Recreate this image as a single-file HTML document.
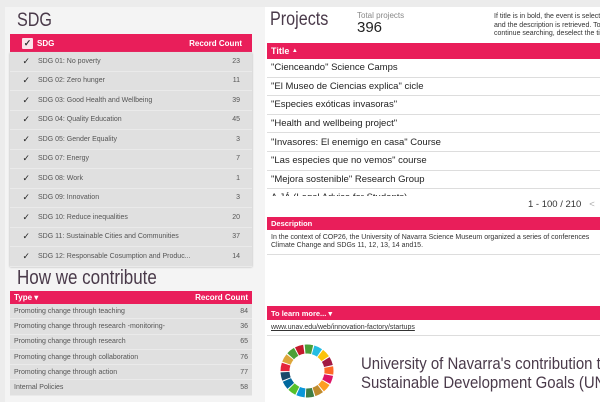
<html><head><style>
*{margin:0;padding:0;box-sizing:border-box}
body{width:600px;height:402px;overflow:hidden;background:#ececec;font-family:"Liberation Sans",sans-serif;position:relative}
.a{position:absolute}
.clip{position:absolute;left:0;top:0;width:600px;height:402px;overflow:hidden}
.hdr{background:#e91e5a;color:#fff;font-weight:bold;font-size:8px;display:flex;align-items:center;padding:0 4px}
.row{display:flex;align-items:center;font-size:7px;color:#555;border-bottom:1px solid #eaeaea}
.big{font-size:19px;color:#4a3a4a;transform:scaleX(.85);transform-origin:left}
</style></head><body><div class="clip">
<div class="a" style="left:5px;top:7px;width:260px;height:395px;background:#f4f4f4"></div>
<div class="a" style="left:265px;top:7px;width:335px;height:395px;background:#fff"></div>
<div class="a big" style="left:17px;top:10px;font-size:19px">SDG</div>
<div class="a hdr" style="left:10px;top:34px;width:242px;height:18px">
<span style="display:inline-block;width:11px;height:11px;background:#fbe3ea;border-radius:1px;color:#333;font-size:9px;line-height:11px;text-align:center;margin:0 4px 0 8px">✓</span>SDG<span style="margin-left:auto;padding-right:6px">Record Count</span></div>
<div class="a" style="left:10px;top:52px;width:242px;height:214px;background:#e0e0e0;box-shadow:0 1px 2px #aaa">
<div class="row" style="height:19.5px"><span style="width:28px;text-align:right;padding-right:8px;color:#222;font-size:9px">✓</span>SDG 01: No poverty<span style="margin-left:auto;padding-right:12px">23</span></div>
<div class="row" style="height:19.5px"><span style="width:28px;text-align:right;padding-right:8px;color:#222;font-size:9px">✓</span>SDG 02: Zero hunger<span style="margin-left:auto;padding-right:12px">11</span></div>
<div class="row" style="height:19.5px"><span style="width:28px;text-align:right;padding-right:8px;color:#222;font-size:9px">✓</span>SDG 03: Good Health and Wellbeing<span style="margin-left:auto;padding-right:12px">39</span></div>
<div class="row" style="height:19.5px"><span style="width:28px;text-align:right;padding-right:8px;color:#222;font-size:9px">✓</span>SDG 04: Quality Education<span style="margin-left:auto;padding-right:12px">45</span></div>
<div class="row" style="height:19.5px"><span style="width:28px;text-align:right;padding-right:8px;color:#222;font-size:9px">✓</span>SDG 05: Gender Equality<span style="margin-left:auto;padding-right:12px">3</span></div>
<div class="row" style="height:19.5px"><span style="width:28px;text-align:right;padding-right:8px;color:#222;font-size:9px">✓</span>SDG 07: Energy<span style="margin-left:auto;padding-right:12px">7</span></div>
<div class="row" style="height:19.5px"><span style="width:28px;text-align:right;padding-right:8px;color:#222;font-size:9px">✓</span>SDG 08: Work<span style="margin-left:auto;padding-right:12px">1</span></div>
<div class="row" style="height:19.5px"><span style="width:28px;text-align:right;padding-right:8px;color:#222;font-size:9px">✓</span>SDG 09: Innovation<span style="margin-left:auto;padding-right:12px">3</span></div>
<div class="row" style="height:19.5px"><span style="width:28px;text-align:right;padding-right:8px;color:#222;font-size:9px">✓</span>SDG 10: Reduce inequalities<span style="margin-left:auto;padding-right:12px">20</span></div>
<div class="row" style="height:19.5px"><span style="width:28px;text-align:right;padding-right:8px;color:#222;font-size:9px">✓</span>SDG 11: Sustainable Cities and Communities<span style="margin-left:auto;padding-right:12px">37</span></div>
<div class="row" style="height:19.5px"><span style="width:28px;text-align:right;padding-right:8px;color:#222;font-size:9px">✓</span>SDG 12: Responsable Cosumption and Produc...<span style="margin-left:auto;padding-right:12px">14</span></div>
</div>
<div class="a big" style="left:17px;top:267px;font-size:20px">How we contribute</div>
<div class="a hdr" style="left:10px;top:291px;width:242px;height:13px">Type&nbsp;▾<span style="margin-left:auto">Record Count</span></div>
<div class="a" style="left:10px;top:304px;width:242px;height:92px;background:#e0e0e0">
<div class="row" style="height:15.3px;padding:0 4px">Promoting change through teaching<span style="margin-left:auto">84</span></div>
<div class="row" style="height:15.3px;padding:0 4px">Promoting change through research -monitoring-<span style="margin-left:auto">36</span></div>
<div class="row" style="height:15.3px;padding:0 4px">Promoting change through research<span style="margin-left:auto">65</span></div>
<div class="row" style="height:15.3px;padding:0 4px">Promoting change through collaboration<span style="margin-left:auto">76</span></div>
<div class="row" style="height:15.3px;padding:0 4px">Promoting change through action<span style="margin-left:auto">77</span></div>
<div class="row" style="height:15.3px;padding:0 4px">Internal Policies<span style="margin-left:auto">58</span></div>
</div>
<div class="a big" style="left:270px;top:9px">Projects</div>
<div class="a" style="left:357px;top:11px;font-size:8px;color:#888">Total projects</div>
<div class="a" style="left:357px;top:19px;font-size:15px;color:#222">396</div>
<div class="a" style="left:494px;top:13px;font-size:7px;color:#333;line-height:8.5px;white-space:nowrap">If title is in bold, the event is selected<br>and the description is retrieved. To<br>continue searching, deselect the title</div>
<div class="a hdr" style="left:267px;top:43px;width:333px;height:16px;font-size:9px">Title&nbsp;<span style="font-size:6px">▲</span></div>
<div class="a" style="left:267px;top:59px;width:333px;height:137px;overflow:hidden">
<div class="row" style="height:18.6px;font-size:9.5px;color:#222;padding-left:4px;border-color:#ddd">"Cienceando" Science Camps</div>
<div class="row" style="height:18.6px;font-size:9.5px;color:#222;padding-left:4px;border-color:#ddd">"El Museo de Ciencias explica" cicle</div>
<div class="row" style="height:18.6px;font-size:9.5px;color:#222;padding-left:4px;border-color:#ddd">"Especies exóticas invasoras"</div>
<div class="row" style="height:18.6px;font-size:9.5px;color:#222;padding-left:4px;border-color:#ddd">"Health and wellbeing project"</div>
<div class="row" style="height:18.6px;font-size:9.5px;color:#222;padding-left:4px;border-color:#ddd">"Invasores: El enemigo en casa" Course</div>
<div class="row" style="height:18.6px;font-size:9.5px;color:#222;padding-left:4px;border-color:#ddd">"Las especies que no vemos" course</div>
<div class="row" style="height:18.6px;font-size:9.5px;color:#222;padding-left:4px;border-color:#ddd">"Mejora sostenible" Research Group</div>
<div class="row" style="height:18.6px;font-size:9.5px;color:#222;padding-left:4px;border-color:#ddd">A JÁ (Legal Advice for Students)</div>
</div>
<div class="a" style="left:528px;top:199px;font-size:9.5px;color:#333">1 - 100 / 210 &nbsp; <span style="color:#aaa">&lt;</span></div>
<div class="a hdr" style="left:267px;top:217px;width:333px;height:13px;font-size:7.5px">Description</div>
<div class="a" style="left:271px;top:234px;font-size:7px;color:#333;line-height:8px;white-space:nowrap">In the context of COP26, the University of Navarra Science Museum organized a series of conferences<br>Climate Change and SDGs 11, 12, 13, 14 and15.</div>
<div class="a" style="left:267px;top:254px;width:333px;height:1px;background:#ddd"></div>
<div class="a hdr" style="left:267px;top:306px;width:333px;height:14px;font-size:7.5px">To learn more...&nbsp;▾</div>
<div class="a" style="left:271px;top:324px;font-size:7px;color:#333;text-decoration:underline">www.unav.edu/web/innovation-factory/startups</div>
<div class="a" style="left:267px;top:335px;width:333px;height:1px;background:#ddd"></div>
<svg class="a" style="left:278px;top:342px" width="58" height="58" viewBox="-29 -29 58 58">
<g fill="none" stroke-width="9" transform="rotate(-95)">
<circle r="22" stroke="#4c9f38" stroke-dasharray="7.1 131" stroke-dashoffset="0"/>
<circle r="22" stroke="#26bde2" stroke-dasharray="7.1 131" stroke-dashoffset="-8.1"/>
<circle r="22" stroke="#fcc30b" stroke-dasharray="7.1 131" stroke-dashoffset="-16.2"/>
<circle r="22" stroke="#a21942" stroke-dasharray="7.1 131" stroke-dashoffset="-24.3"/>
<circle r="22" stroke="#fd6925" stroke-dasharray="7.1 131" stroke-dashoffset="-32.4"/>
<circle r="22" stroke="#dd1367" stroke-dasharray="7.1 131" stroke-dashoffset="-40.5"/>
<circle r="22" stroke="#fd9d24" stroke-dasharray="7.1 131" stroke-dashoffset="-48.6"/>
<circle r="22" stroke="#bf8b2e" stroke-dasharray="7.1 131" stroke-dashoffset="-56.7"/>
<circle r="22" stroke="#3f7e44" stroke-dasharray="7.1 131" stroke-dashoffset="-64.8"/>
<circle r="22" stroke="#0a97d9" stroke-dasharray="7.1 131" stroke-dashoffset="-72.9"/>
<circle r="22" stroke="#56c02b" stroke-dasharray="7.1 131" stroke-dashoffset="-81"/>
<circle r="22" stroke="#00689d" stroke-dasharray="7.1 131" stroke-dashoffset="-89.1"/>
<circle r="22" stroke="#19486a" stroke-dasharray="7.1 131" stroke-dashoffset="-97.2"/>
<circle r="22" stroke="#e5243b" stroke-dasharray="7.1 131" stroke-dashoffset="-105.3"/>
<circle r="22" stroke="#dda63a" stroke-dasharray="7.1 131" stroke-dashoffset="-113.4"/>
<circle r="22" stroke="#4c9f38" stroke-dasharray="7.1 131" stroke-dashoffset="-121.5"/>
<circle r="22" stroke="#c5192d" stroke-dasharray="7.1 131" stroke-dashoffset="-129.6"/>
</g>
</svg>
<div class="a" style="left:361px;top:354px;font-size:17px;color:#4a3a4a;line-height:19px;white-space:nowrap;transform:scaleX(.88);transform-origin:left">University of Navarra's contribution to the<br>Sustainable Development Goals (UN)</div>
</div></body></html>
